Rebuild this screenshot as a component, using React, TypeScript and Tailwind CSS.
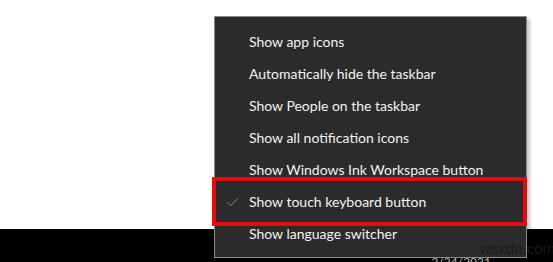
import { Check } from 'lucide-react';

const items = [
  'Show app icons',
  'Automatically hide the taskbar',
  'Show People on the taskbar',
  'Show all notification icons',
  'Show Windows Ink Workspace button',
  'Show touch keyboard button',
  'Show language switcher',
];

export default function App() {
  return (
    <div className="relative h-[262px] w-[553px] overflow-hidden bg-white font-['Lato',sans-serif]">
      <div className="flex h-full flex-col">
        <div className="h-[229px] shrink-0 bg-white" />
        <div className="flex min-h-0 flex-1 justify-end overflow-hidden bg-black pr-[62px] pt-[27px]">
          <p className="text-[12px] leading-none text-[#d8d8d8]">2/24/2021</p>
        </div>
      </div>

      <div className="absolute left-[214px] top-[16px] flex h-[242px] w-[313px] flex-col border border-[#8c8c8c] bg-[#2b2b2b] pt-[9px] shadow-[3px_3px_3px_rgba(0,0,0,0.22)]">
        {items.map((item, i) => (
          <div key={item} className="relative flex h-[32px] items-center pl-[34px]">
            {i === 5 && (
              <Check
                className="absolute left-[10px] top-[9px] text-[#a8a8a8]"
                size={15}
                strokeWidth={1.3}
              />
            )}
            <p className="text-[14px] leading-none text-[#f2f2f2]">{item}</p>
          </div>
        ))}

        <div className="absolute left-[-3px] top-[160px] h-[49px] w-[315px] border-[4px] border-[#e30b0b]" />
      </div>

      <p className="absolute left-[480px] top-[241px] font-['Liberation_Sans',sans-serif] text-[15px] leading-none text-[#1a1a1a]">
        wsxdn.com
      </p>
    </div>
  );
}
